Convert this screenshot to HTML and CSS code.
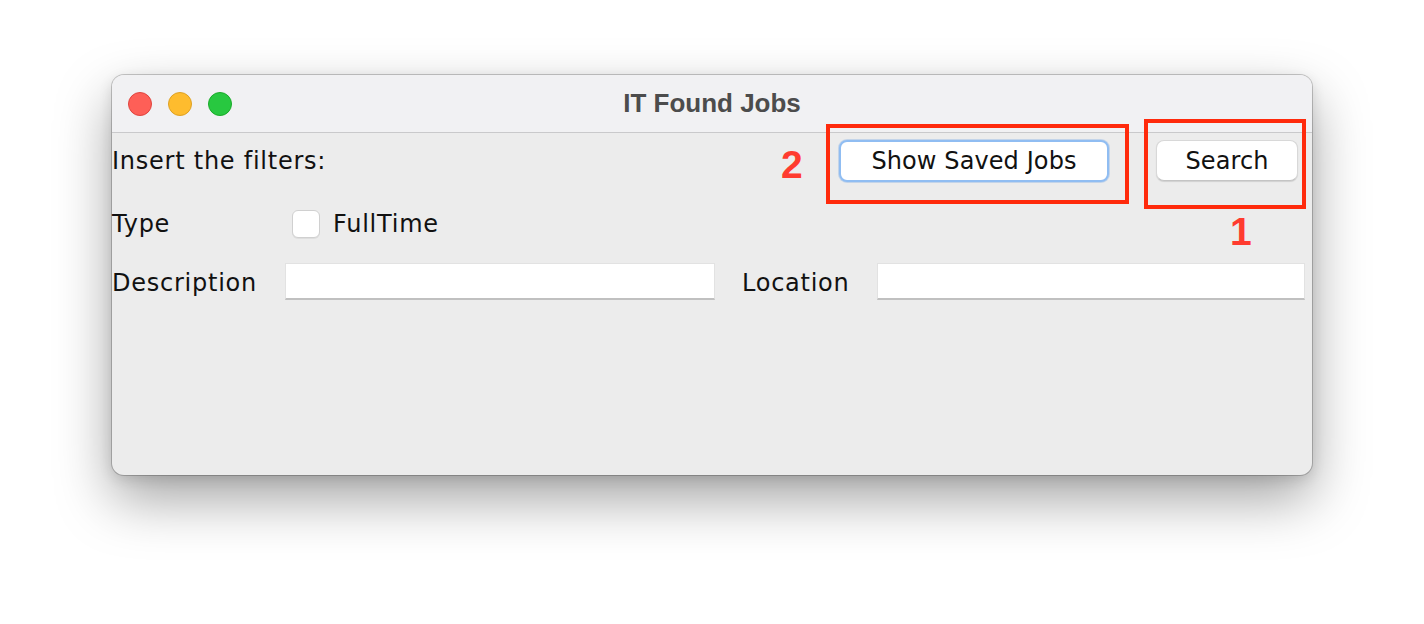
FILE: index.html
```html
<!DOCTYPE html>
<html>
<head>
<meta charset="utf-8">
<link rel="stylesheet" href="styles.css">
</head>
<body>
<div class="window">
  <div class="titlebar">
    <div class="lights">
      <span class="light red"></span>
      <span class="light yellow"></span>
      <span class="light green"></span>
    </div>
    <div class="title">IT Found Jobs</div>
  </div>
  <div class="content">
    <div class="row row-top">
      <span class="label">Insert the filters:</span>
      <div class="buttons">
        <div class="btn-wrap btn-wrap-2">
          <button class="btn btn-focus">Show Saved Jobs</button>
          <span class="mark mark-box mark-box-2"></span>
          <span class="mark mark-num mark-num-2">2</span>
        </div>
        <div class="btn-wrap btn-wrap-1">
          <button class="btn btn-search">Search</button>
          <span class="mark mark-box mark-box-1"></span>
          <span class="mark mark-num mark-num-1">1</span>
        </div>
      </div>
    </div>
    <div class="row row-type">
      <span class="label label-col">Type</span>
      <span class="checkbox"></span>
      <span class="label">FullTime</span>
    </div>
    <div class="row row-fields">
      <span class="label label-col">Description</span>
      <span class="field field-desc"></span>
      <span class="label label-loc">Location</span>
      <span class="field field-loc"></span>
    </div>
  </div>
</div>
</body>
</html>
```
FILE: styles.css
```css
html, body {
  margin: 0;
  padding: 0;
  background: #ffffff;
}
body {
  min-height: 624px;
  box-sizing: border-box;
  padding: 75px 0 0 112px;
  font-family: "DejaVu Sans", "Noto Sans", sans-serif;
}
.window {
  width: 1200px;
  height: 400px;
  box-sizing: border-box;
  background: #ececec;
  border-radius: 12px;
  box-shadow: 0 0 0 1px rgba(0,0,0,0.2), 0 24px 55px rgba(0,0,0,0.36), 0 4px 14px rgba(0,0,0,0.12);
  display: flex;
  flex-direction: column;
}
.titlebar {
  height: 57px;
  flex: none;
  display: flex;
  align-items: center;
  position: relative;
  background: #f1f1f3;
  border-radius: 12px 12px 0 0;
  border-bottom: 1px solid #c9c9cb;
}
.lights {
  display: flex;
  gap: 16px;
  padding-left: 16px;
}
.light {
  width: 24px;
  height: 24px;
  border-radius: 50%;
  box-sizing: border-box;
}
.red { background: #fe5f57; border: 1px solid #e0443e; }
.yellow { background: #febc2e; border: 1px solid #dea123; }
.green { background: #28c840; border: 1px solid #1aab29; }
.title {
  position: absolute;
  left: 0;
  right: 0;
  top: 0;
  bottom: 0;
  display: flex;
  align-items: center;
  justify-content: center;
  font-family: "Liberation Sans", Arial, sans-serif;
  font-weight: bold;
  font-size: 26px;
  color: #4c4c4c;
  pointer-events: none;
}
.content {
  flex: 1;
  display: flex;
  flex-direction: column;
}
.row {
  display: flex;
  align-items: center;
}
.label {
  font-size: 24px;
  letter-spacing: 0.75px;
  color: #111;
  white-space: nowrap;
}
.row-top {
  height: 55px;
  justify-content: space-between;
  padding-right: 14px;
}
.buttons {
  display: flex;
  align-items: center;
  gap: 47px;
}
.btn-wrap {
  position: relative;
  display: flex;
}
.btn {
  font-family: "DejaVu Sans", sans-serif;
  font-size: 24px;
  letter-spacing: 0.1px;
  color: #111;
  background: #ffffff;
  border-radius: 8px;
  box-sizing: border-box;
  margin: 0;
  padding: 0;
}
.btn-focus {
  width: 270px;
  height: 42px;
  border: 2px solid #90bdf2;
  box-shadow: 0 0 0 1px rgba(120,170,230,0.35);
}
.btn-search {
  width: 142px;
  height: 41px;
  border: 1px solid #d8d8d8;
  border-bottom-color: #c4c4c4;
  box-shadow: 0 1px 1px rgba(0,0,0,0.12);
}
.mark {
  position: absolute;
  pointer-events: none;
}
.mark-box {
  border: 4px solid #ff2a0c;
  box-sizing: border-box;
}
.mark-box-2 {
  left: -13px;
  top: -16px;
  width: 303px;
  height: 80px;
}
.mark-box-1 {
  left: -12px;
  top: -21px;
  width: 162px;
  height: 90px;
}
.mark-num {
  font-family: "Liberation Sans", Arial, sans-serif;
  font-weight: bold;
  font-size: 39px;
  color: #ff3b2f;
  line-height: 1;
}
.mark-num-2 {
  left: -58px;
  top: 5px;
}
.mark-num-1 {
  left: 74px;
  top: 72px;
}
.row-type {
  height: 28px;
  margin-top: 22px;
}
.label-col {
  width: 173px;
  flex: none;
}
.label-col + .checkbox {
  margin-left: 7px;
}
.checkbox {
  width: 28px;
  height: 28px;
  box-sizing: border-box;
  background: #fff;
  border: 1px solid #d0d0d0;
  border-radius: 6px;
  margin-right: 13px;
  box-shadow: 0 1px 0 rgba(0,0,0,0.06);
}
.row-fields {
  margin-top: 25px;
  height: 37px;
  padding-right: 7px;
}
.row-fields .label {
  padding-top: 3px;
}
.field {
  height: 37px;
  box-sizing: border-box;
  background: #fff;
  border: 1px solid #e2e2e2;
  border-bottom: 2px solid #c0c0c0;
  flex: none;
}
.field-desc {
  width: 430px;
}
.label-loc {
  margin-left: 27px;
  width: 135px;
  flex: none;
}
.field-loc {
  width: 428px;
}
```
